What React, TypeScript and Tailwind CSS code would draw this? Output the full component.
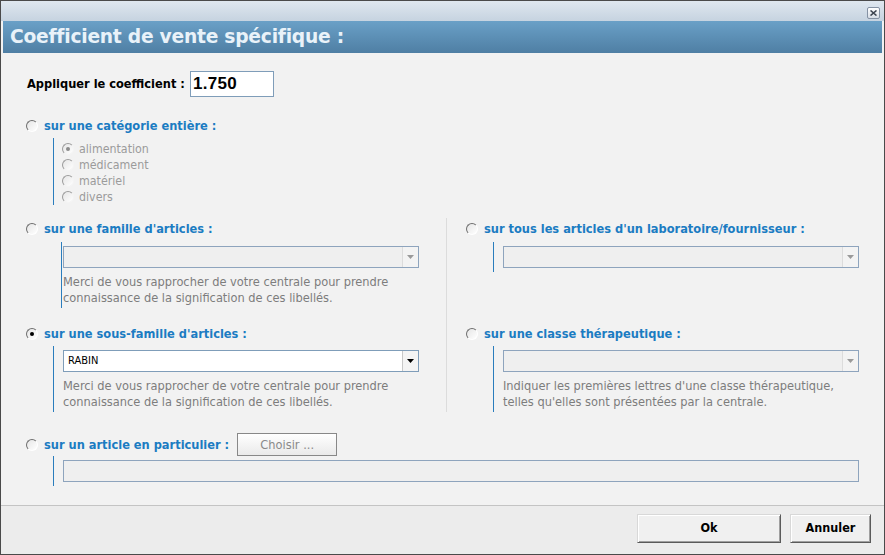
import { useState } from 'react';

const ui = "font-['DejaVu_Sans_Condensed','DejaVu_Sans',sans-serif]";

function Radio({ checked = false, faded = false }: { checked?: boolean; faded?: boolean }) {
    return (
        <span
            className={`relative inline-block w-[12px] h-[12px] rounded-full border shrink-0 bg-gradient-to-br from-[#e6e6e6] to-white ${
                faded ? 'border-t-[#9c9c9c] border-l-[#9c9c9c] border-b-[#f4f4f4] border-r-[#f4f4f4]' : 'border-t-[#6e6e6e] border-l-[#6e6e6e] border-b-white border-r-white'
            }`}
        >
            {checked && (
                <span className={`absolute left-[3px] top-[3px] w-[4px] h-[4px] rounded-full ${faded ? 'bg-[#8a8a8a]' : 'bg-black'}`} />
            )}
        </span>
    );
}

function Option({ label, checked = false }: { label: string; checked?: boolean }) {
    return (
        <div className="flex items-center h-[16px]">
            <Radio checked={checked} />
            <span className={`ml-[6px] text-[12.7px] font-bold text-[#1b7cc2] ${ui}`}>{label}</span>
        </div>
    );
}

function Combo({ value, enabled = false }: { value?: string; enabled?: boolean }) {
    return (
        <div className={`flex h-[22px] border ${enabled ? 'bg-white border-[#7f9db9]' : 'bg-[#efefef] border-[#8ea4bd]'}`}>
            <div className={`flex-1 flex items-center pl-[4px] text-[11px] text-black ${ui}`}>{value}</div>
            <div className={`w-[16px] flex items-center justify-center border-l ${enabled ? 'border-[#c8c8c8] bg-[#f4f4f4]' : 'border-[#dcdcdc] bg-[#f3f3f3]'}`}>
                <svg width="7" height="4" viewBox="0 0 7 4">
                    <path d="M0 0h7L3.5 4z" fill={enabled ? '#000' : '#9a9a9a'} />
                </svg>
            </div>
        </div>
    );
}

function Help({ lines }: { lines: string[] }) {
    return (
        <div className={`mt-[6px] text-[12.7px] leading-[16px] text-[#7d7d7d] ${ui}`}>
            {lines.map((l) => (
                <div key={l}>{l}</div>
            ))}
        </div>
    );
}

export default function App() {
    const [coef] = useState('1.750');
    const help = ['Merci de vous rapprocher de votre centrale pour prendre', 'connaissance de la signification de ces libellés.'];

    return (
        <div className="w-[885px] h-[555px] border border-[#4a4a4a] bg-[#f2f2f2] flex flex-col overflow-hidden">
            {/* title bar */}
            <div className="h-[20px] bg-gradient-to-b from-[#dfe7ef] to-[#c6d3e0] flex justify-end items-start pr-[4px] pt-[6px]">
                <div className="w-[13px] h-[12px] border border-[#8592a4] rounded-[2px] bg-gradient-to-b from-white to-[#d6dde6] flex items-center justify-center">
                    <svg width="7" height="6" viewBox="0 0 7 6">
                        <path d="M0.5 0.5l6 5M6.5 0.5l-6 5" stroke="#3c4450" strokeWidth="1.6" />
                    </svg>
                </div>
            </div>

            {/* header band */}
            <div className="mx-[2px] h-[32px] bg-gradient-to-b from-[#6aa0c7] to-[#4f7fa4] flex items-center pl-[7px]">
                <span className="text-[18.7px] font-bold text-[#e9f2f9] font-['DejaVu_Sans',sans-serif] tracking-[-0.25px]">
                    Coefficient de vente spécifique :
                </span>
            </div>

            {/* body */}
            <div className="flex-1 flex flex-col">
                <div className="mt-[18px] pl-[26px] flex items-center h-[26px]">
                    <span className={`text-[12.7px] font-bold text-black ${ui}`}>Appliquer le coefficient :</span>
                    <div className="ml-[5px] w-[84px] h-[26px] bg-white border border-[#7f9db9] flex items-center pl-[2px]">
                        <span className="text-[17px] font-bold text-black font-['Liberation_Sans',sans-serif] tracking-[0.3px]">{coef}</span>
                    </div>
                </div>

                <div className="mt-[21px] pl-[25px]">
                    <Option label="sur une catégorie entière :" />
                </div>
                <div className="mt-[4px] ml-[52px] border-l border-[#2a7dbd] pt-[3px] pl-[8px] w-fit">
                    {[
                        ['alimentation', true],
                        ['médicament', false],
                        ['matériel', false],
                        ['divers', false],
                    ].map(([l, c]) => (
                        <div key={l as string} className="flex items-center h-[16px]">
                            <Radio faded checked={c as boolean} />
                            <span className={`ml-[5px] text-[12.3px] text-[#9b9b9b] ${ui}`}>{l as string}</span>
                        </div>
                    ))}
                </div>

                {/* two columns */}
                <div className="mt-[13px] flex">
                    <div className="w-[445px] pl-[25px]">
                        <div className="pt-[3px]">
                            <Option label="sur une famille d'articles :" />
                        </div>
                        <div className="mt-[5px] ml-[35px] border-l border-[#2a7dbd] pt-[4px] pl-[1px] pb-[2px] w-[358px]">
                            <Combo />
                            <Help lines={help} />
                        </div>

                        <div className="mt-[18px]">
                            <Option checked label="sur une sous-famille d'articles :" />
                        </div>
                        <div className="mt-[4px] ml-[27px] border-l border-[#2a7dbd] pt-[4px] pl-[9px] pb-[2px] w-[366px]">
                            <Combo enabled value="RABIN" />
                            <Help lines={help} />
                        </div>
                    </div>

                    <div className="flex-1 border-l border-[#dcdcdc] pl-[19px]">
                        <div className="pt-[3px]">
                            <Option label="sur tous les articles d'un laboratoire/fournisseur :" />
                        </div>
                        <div className="mt-[5px] ml-[27px] border-l border-[#2a7dbd] pt-[4px] pl-[9px] pb-[4px] w-[366px]">
                            <Combo />
                        </div>

                        <div className="mt-[54px]">
                            <Option label="sur une classe thérapeutique :" />
                        </div>
                        <div className="mt-[4px] ml-[27px] border-l border-[#2a7dbd] pt-[4px] pl-[9px] pb-[2px] w-[366px]">
                            <Combo />
                            <Help
                                lines={[
                                    "Indiquer les premières lettres d'une classe thérapeutique,",
                                    "telles qu'elles sont présentées par la centrale.",
                                ]}
                            />
                        </div>
                    </div>
                </div>

                <div className="mt-[21px] pl-[25px] flex items-center">
                    <Option label="sur un article en particulier :" />
                    <button
                        className={`ml-[8px] w-[100px] h-[23px] border border-[#888] bg-gradient-to-b from-white to-[#eaeaea] text-[12.7px] text-[#8a8a8a] ${ui}`}
                    >
                        Choisir ...
                    </button>
                </div>
                <div className="ml-[52px] border-l border-[#2a7dbd] pt-[4px] pl-[9px] pb-[4px] w-[806px]">
                    <div className="h-[22px] bg-[#efefef] border border-[#8ea4bd]" />
                </div>
            </div>

            {/* footer */}
            <div className="h-[49px] border-t border-[#c4c4c4] bg-[#ececec] flex justify-end items-start pt-[8px] pr-[13px] gap-[9px]">
                <button className={`w-[144px] h-[29px] border border-t-[#d8d8d8] border-l-[#d8d8d8] border-b-[#5a5a5a] border-r-[#5a5a5a] bg-[#f0f0f0] shadow-[inset_1px_1px_0_#fff,inset_-1px_-1px_0_#a0a0a0] text-[12.5px] font-bold text-black ${ui}`}>
                    Ok
                </button>
                <button className={`w-[81px] h-[29px] border border-t-[#d8d8d8] border-l-[#d8d8d8] border-b-[#5a5a5a] border-r-[#5a5a5a] bg-[#f0f0f0] shadow-[inset_1px_1px_0_#fff,inset_-1px_-1px_0_#a0a0a0] text-[12.5px] font-bold text-black ${ui}`}>
                    Annuler
                </button>
            </div>
        </div>
    );
}
